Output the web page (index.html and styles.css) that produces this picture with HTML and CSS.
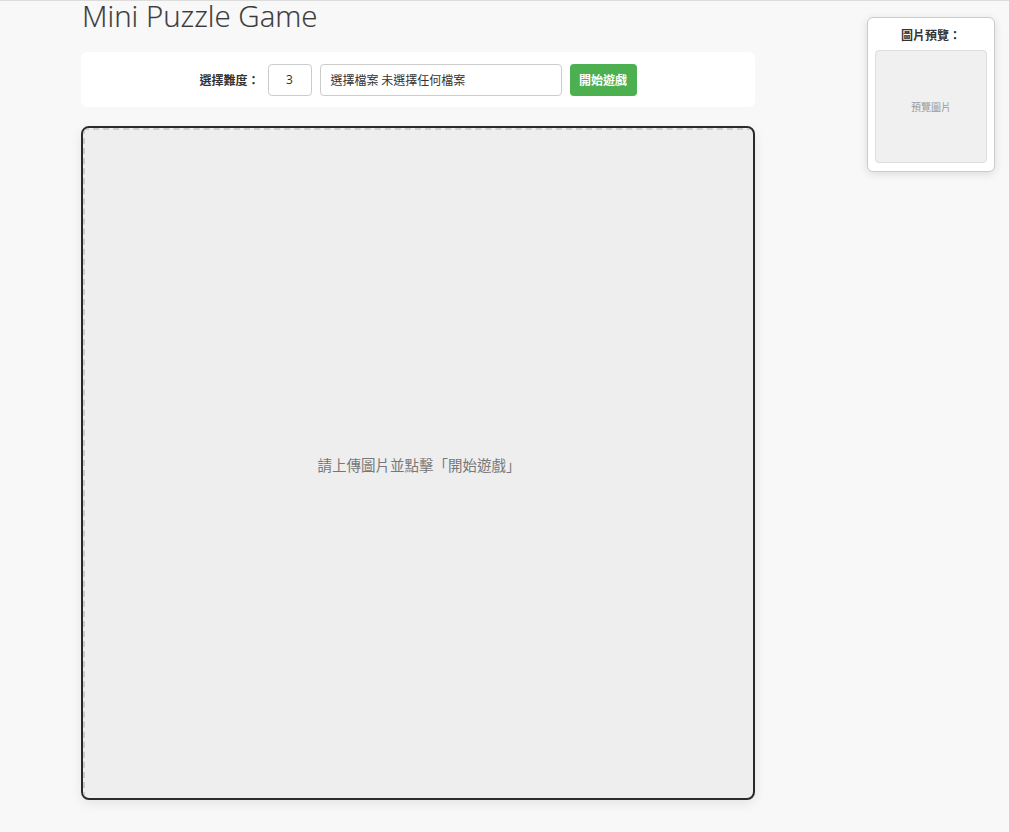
FILE: index.html
```html
<!DOCTYPE html>
<html lang="zh-Hant">
<head>
<meta charset="utf-8">
<title>Mini Puzzle Game</title>
<link rel="stylesheet" href="styles.css">
</head>
<body>
<div class="page">
  <main class="main">
    <h1 class="title">Mini Puzzle Game</h1>
    <div class="controls">
      <label class="ctl-label">選擇難度：</label>
      <div class="num-input">3</div>
      <div class="file-input">選擇檔案 未選擇任何檔案</div>
      <button class="start-btn">開始遊戲</button>
    </div>
    <div class="board">
      <div class="board-inner">請上傳圖片並點擊「開始遊戲」</div>
    </div>
  </main>
  <aside class="preview">
    <div class="preview-title">圖片預覽：</div>
    <div class="preview-box">預覽圖片</div>
  </aside>
</div>
</body>
</html>
```
FILE: styles.css
```css
html {
  border-top: 1px solid #dcdcdc;
  background: #f8f8f8;
}
body {
  margin: 0;
  background: #f8f8f8;
  font-family: "Open Sans", "Noto Sans CJK TC", sans-serif;
  color: #333;
  height: 831px;
  overflow: hidden;
}
.page {
  position: relative;
  padding-left: 81px;
}
.main {
  width: 674px;
  display: flex;
  flex-direction: column;
}
.title {
  margin: 0;
  height: 51px;
  font-size: 29.5px;
  font-weight: 300;
  line-height: 30px;
  color: #3a3a3a;
  padding-left: 1px;
  -webkit-text-stroke: 0.2px #3a3a3a;
}
.controls {
  height: 55px;
  background: #fff;
  border-radius: 6px;
  display: flex;
  align-items: center;
  justify-content: center;
  gap: 8px;
  font-size: 12px;
}
.ctl-label {
  font-weight: bold;
  font-family: "Noto Sans CJK TC", sans-serif;
  color: #333;
}
.num-input {
  width: 44px;
  height: 32px;
  box-sizing: border-box;
  border: 1px solid #ccc;
  border-radius: 4px;
  display: flex;
  align-items: center;
  justify-content: center;
  font-size: 12px;
}
.file-input {
  width: 242px;
  height: 32px;
  box-sizing: border-box;
  border: 1px solid #ccc;
  border-radius: 4px;
  display: flex;
  align-items: center;
  padding-left: 10px;
  font-family: "Noto Sans CJK TC", sans-serif;
  font-size: 12px;
  color: #333;
}
.start-btn {
  width: 67px;
  height: 32px;
  border: none;
  border-radius: 4px;
  background: #4caf50;
  color: #fff;
  font-weight: bold;
  font-size: 12px;
  font-family: "Noto Sans CJK TC", sans-serif;
  padding: 0;
}
.board {
  margin-top: 19px;
  width: 674px;
  height: 674px;
  box-sizing: border-box;
  border: 2px solid #2a2a2a;
  border-radius: 8px;
  background: #eee;
  overflow: hidden;
  box-shadow: 0 4px 12px rgba(0,0,0,0.08);
}
.board-inner {
  width: 100%;
  height: 100%;
  box-sizing: border-box;
  border-top: 2px dashed #ccc;
  border-left: 2px dashed #ccc;
  display: flex;
  align-items: center;
  justify-content: center;
  font-family: "Noto Sans CJK TC", sans-serif;
  font-size: 14.5px;
  color: #777;
}
.preview {
  position: absolute;
  top: 16px;
  right: 14px;
  width: 128px;
  height: 155px;
  box-sizing: border-box;
  background: #fff;
  border: 1px solid #ccc;
  border-radius: 6px;
  box-shadow: 0 2px 8px rgba(0,0,0,0.12);
  display: flex;
  flex-direction: column;
  align-items: center;
  padding: 8px 7px 7px;
}
.preview-title {
  font-family: "Noto Sans CJK TC", sans-serif;
  font-weight: bold;
  font-size: 12px;
  line-height: 18px;
  color: #333;
  margin-bottom: 6px;
}
.preview-box {
  width: 112px;
  height: 113px;
  box-sizing: border-box;
  background: #f0f0f0;
  border: 1px solid #ddd;
  border-radius: 4px;
  display: flex;
  align-items: center;
  justify-content: center;
  font-family: "Noto Sans CJK TC", sans-serif;
  font-size: 10px;
  color: #999;
}
```
